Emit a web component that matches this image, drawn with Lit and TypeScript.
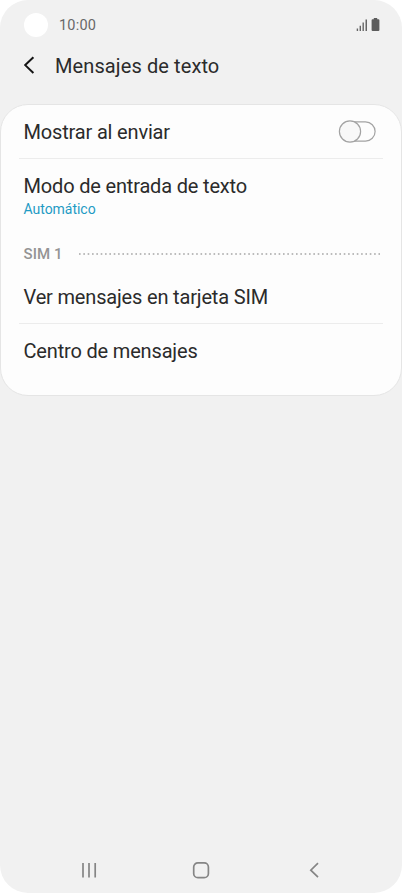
import { LitElement, html, css } from "lit";
import { customElement } from "lit/decorators.js";

@customElement("app-root")
export class AppRoot extends LitElement {
  static styles = css`
    :host {
      display: block;
      width: 402px;
      height: 893px;
      background: #fff;
      font-family: Roboto, "Liberation Sans", sans-serif;
      color: #2b2b2b;
    }
    * { box-sizing: border-box; }
    svg { display: block; }
    .phone {
      height: 893px;
      display: flex;
      flex-direction: column;
      background: #f1f1f1;
      border-radius: 28px;
      overflow: hidden;
    }
    .status {
      height: 50px;
      display: flex;
      align-items: center;
      padding: 0 21px 0 24px;
    }
    .camera { width: 24px; height: 24px; border-radius: 50%; background: #fff; }
    .clock {
      margin-left: 11px;
      flex: 1;
      font-size: 14.5px;
      letter-spacing: 0.2px;
      line-height: 20px;
      color: #686868;
      padding-top: 1px;
    }
    .header {
      height: 54px;
      display: flex;
      padding: 5px 0 0 22px;
    }
    .title {
      margin: -1px 0 0 17px;
      font-weight: 400;
      font-size: 20px;
      line-height: 24px;
      letter-spacing: 0.1px;
    }
    .card {
      height: 292px;
      background: #fdfdfd;
      border: 1px solid #e5e5e5;
      border-radius: 28px;
      padding: 0 18px;
    }
    .row {
      display: flex;
      justify-content: space-between;
      padding: 0 5px 0 4.5px;
      font-size: 20px;
      line-height: 24px;
      letter-spacing: -0.17px;
    }
    .send { height: 54px; padding-top: 15px; border-bottom: 1px solid #ececec; }
    .mode { height: 77px; padding-top: 15px; flex-direction: column; justify-content: flex-start; }
    .value {
      font-size: 14px;
      line-height: 18px;
      letter-spacing: -0.03px;
      color: #1f9bc4;
      margin-top: 2px;
    }
    .section {
      height: 36px;
      display: flex;
      align-items: center;
      padding-left: 4.5px;
      font-size: 15px;
      line-height: 20px;
      font-weight: 500;
      letter-spacing: 0.1px;
      color: #949494;
    }
    .section span { width: 54.5px; }
    .sim { height: 52px; padding-top: 13px; border-bottom: 1px solid #ececec; }
    .center { padding-top: 15px; }
    .nav {
      margin-top: auto;
      height: 46px;
      display: flex;
      justify-content: space-between;
      padding: 14px 80px 0 80px;
    }
  `;

  render() {
    return html`
      <div class="phone">
        <div class="status">
          <div class="camera"></div>
          <div class="clock">10:00</div>
          <svg width="25" height="14" viewBox="0 0 25 14" fill="#666">
            <path d="M.7 10.6h1.4V13H.7zM3.6 7.8H5V13H3.6zM6.5 4.6h1.4V13H6.5zM9.5 1.6H11V13H9.5z" />
            <path d="M17.8 0h3.4v1.2h1.2q1 0 1 1V12q0 1-1 1h-5.8q-1 0-1-1V2.2q0-1 1-1h1.2z" fill="#5c5c5c" />
          </svg>
        </div>
        <header class="header">
          <svg width="16" height="22" viewBox="0 0 16 22" fill="none" stroke="#161616" stroke-width="2">
            <path d="M11.4 2.2 3.2 10.1l8.2 7.9" />
          </svg>
          <h1 class="title">Mensajes de texto</h1>
        </header>
        <main class="card">
          <div class="row send">
            <span>Mostrar al enviar</span>
            <svg width="40" height="24" viewBox="0 0 40 24" stroke="#a3a3a3" stroke-width="1.2">
              <rect x="2.5" y="1.9" width="34.6" height="19.2" rx="9.6" fill="#fdfdfd" />
              <circle cx="12" cy="11.5" r="10.6" fill="#f8f8f8" />
            </svg>
          </div>
          <div class="row mode">
            <span>Modo de entrada de texto</span>
            <span class="value">Automático</span>
          </div>
          <div class="section">
            <span>SIM 1</span>
            <svg width="304" height="4" viewBox="0 0 304 4" fill="none" stroke="#a5a5a5" stroke-width="1.5">
              <path d="M1 2H302" stroke-dasharray="1.6 2.74" />
            </svg>
          </div>
          <div class="row sim"><span>Ver mensajes en tarjeta SIM</span></div>
          <div class="row center"><span>Centro de mensajes</span></div>
        </main>
        <nav class="nav">
          <svg width="18" height="18" viewBox="0 0 18 18" stroke="#858585" stroke-width="1.7">
            <path d="M3 2v14.5M9 2v14.5M15.2 2v14.5" />
          </svg>
          <svg width="18" height="18" viewBox="0 0 18 18" fill="none" stroke="#858585" stroke-width="1.7">
            <rect x="1.7" y="1.9" width="14.7" height="14.7" rx="4.2" />
          </svg>
          <svg width="18" height="18" viewBox="0 0 18 18" fill="none" stroke="#858585" stroke-width="1.7">
            <path d="M14 2.2 6.8 9.2l7.2 7" />
          </svg>
        </nav>
      </div>
    `;
  }
}
